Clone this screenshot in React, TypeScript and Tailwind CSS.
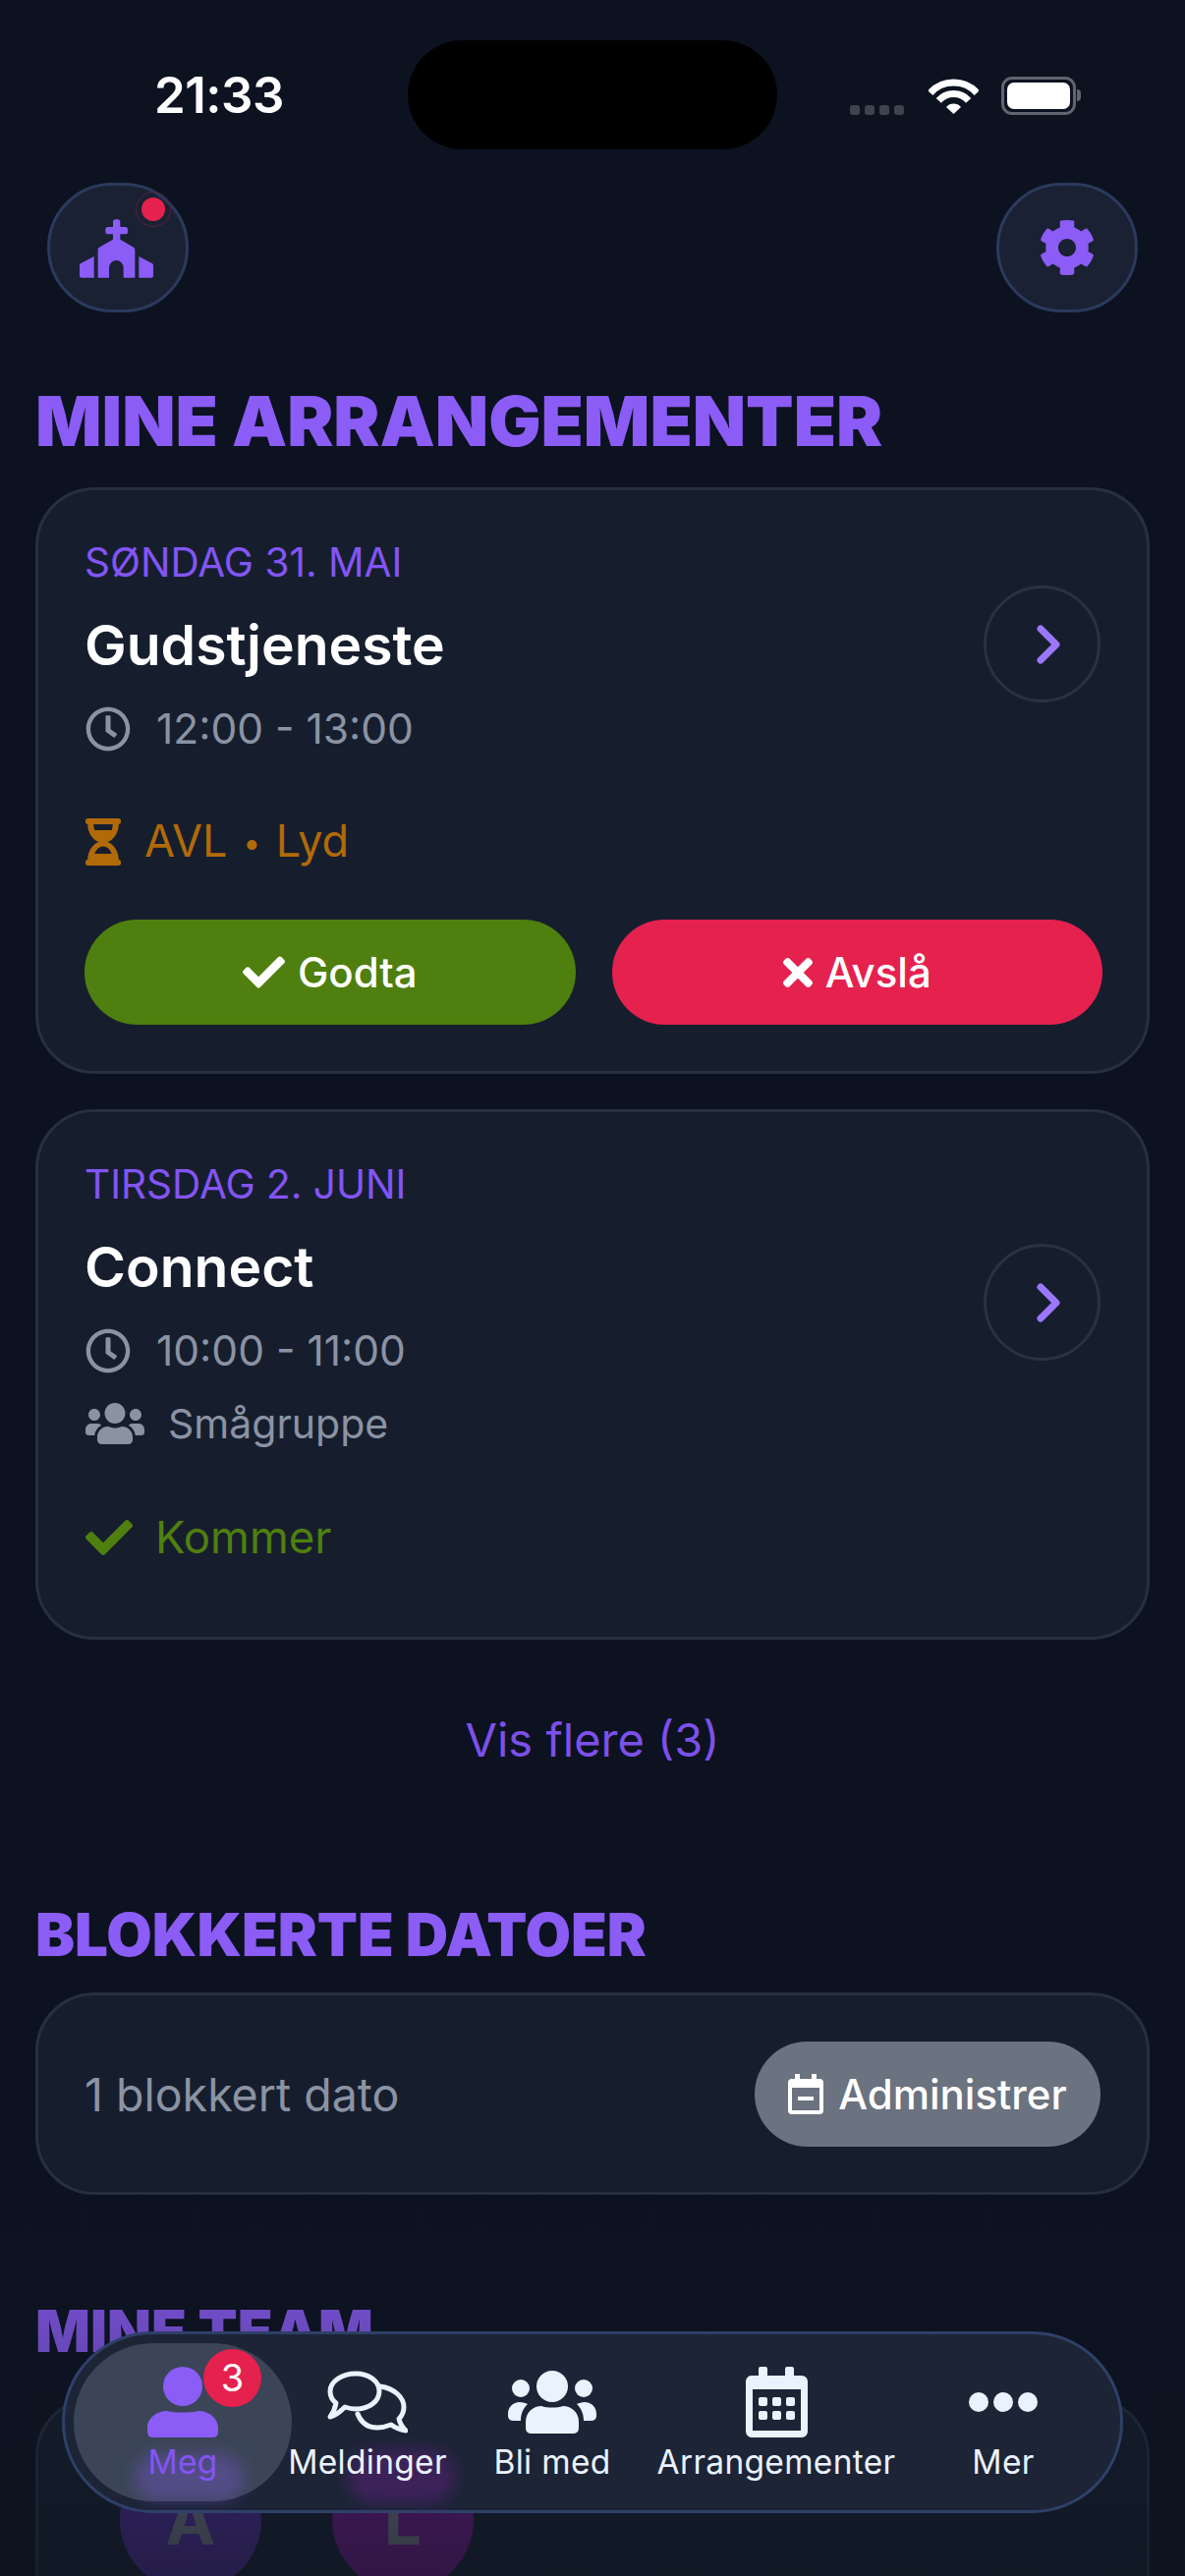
import React from 'react';
import { FaCog, FaRegClock, FaHourglassHalf, FaCheck, FaTimes, FaUsers } from 'react-icons/fa';

const ChurchIcon = () => (
  <svg viewBox="0 0 225 178" className="w-[75px] h-[60px] fill-[#8b5cf6]">
    <path d="M102 8a8 8 0 0 1 8-8h6a8 8 0 0 1 8 8v15h15a8 8 0 0 1 8 8v6a8 8 0 0 1-8 8h-15v16l41 24a8 8 0 0 1 4 7v86h-35v-30a22 23 0 0 0-44 0v30H56V92a8 8 0 0 1 4-7l42-24V45H87a8 8 0 0 1-8-8v-6a8 8 0 0 1 8-8h15z" />
    <path d="M44 113v65H6a6 6 0 0 1-6-6v-32a7 7 0 0 1 4-6zM181 113v65h38a6 6 0 0 0 6-6v-32a7 7 0 0 0-4-6z" />
  </svg>
);

const Chevron = () => (
  <div className="w-[119px] h-[119px] shrink-0 -mt-[6px] rounded-full border-[3px] border-[#283243] flex items-center justify-center">
    <svg viewBox="0 0 24 40" className="w-[24px] h-[40px] ml-[13px] fill-none stroke-[#9b77fb] stroke-[7px]" strokeLinecap="round" strokeLinejoin="round">
      <path d="M4 4l16 16L4 36" />
    </svg>
  </div>
);

const Card = ({ className, children }: { className: string; children: React.ReactNode }) => (
  <div className={`mx-[36px] rounded-[60px] border-[3px] border-[#263040] bg-[#161e2e] ${className}`}>{children}</div>
);

const ChatIcon = () => (
  <svg viewBox="0 0 82 64" className="w-[82px] h-[64px] fill-none stroke-[#eaf2fd] stroke-[5px]" strokeLinejoin="round" strokeLinecap="round">
    <path d="M29 3C43 3 53 11 53 21C53 31 43 39 29 39C25 39 21 38 18 37C13 42 8 46 3 47C6 43 8 38 9 33C5 30 3 26 3 21C3 11 15 3 29 3Z" />
    <path d="M54 16C68 18 78 27 78 37C78 42 76 46 73 49C74 54 77 58 80 61C74 60 69 58 65 55C60 57 56 58 51 58C42 58 35 54 31 44" />
  </svg>
);

const UsersIcon = () => (
  <svg viewBox="0 0 90 64" className="w-[90px] h-[64px] fill-[#eaf2fd]">
    <circle cx="45" cy="16" r="16" />
    <circle cx="13" cy="18" r="9" />
    <circle cx="77" cy="18" r="9" />
    <path d="M18 52C18 42 26 36 34 36C40 38 50 38 56 36C64 36 72 42 72 52V58Q72 64 66 64H24Q18 64 18 58Z" />
    <path d="M0 44C0 37 5 32 12 32C15 32 18 33 20 34C16 38 13 43 13 51H6Q0 51 0 46ZM90 44C90 37 85 32 78 32C75 32 72 33 70 34C74 38 77 43 77 51H84Q90 51 90 46Z" />
  </svg>
);

const CalendarIcon = () => (
  <svg viewBox="0 0 63 72" className="w-[63px] h-[72px] fill-[#eaf2fd]">
    <path fillRule="evenodd" d="M13 2a2 2 0 0 1 2-2h5a2 2 0 0 1 2 2v7h18V2a2 2 0 0 1 2-2h5a2 2 0 0 1 2 2v7h8a6 6 0 0 1 6 6v51a6 6 0 0 1-6 6H6a6 6 0 0 1-6-6V15a6 6 0 0 1 6-6h7zM7 23v42h49V23z" />
    <rect x="13" y="31" width="9" height="9" rx="2" />
    <rect x="27" y="31" width="9" height="9" rx="2" />
    <rect x="41" y="31" width="9" height="9" rx="2" />
    <rect x="13" y="45" width="9" height="9" rx="2" />
    <rect x="27" y="45" width="9" height="9" rx="2" />
    <rect x="41" y="45" width="9" height="9" rx="2" />
  </svg>
);

const navItems = [
  { label: 'Bli med', icon: <UsersIcon /> },
  { label: 'Arrangementer', icon: <CalendarIcon /> },
  { label: 'Mer', icon: null },
];

const NavLabel = ({ children, active }: { children: React.ReactNode; active?: boolean }) => (
  <span className={`block text-[33.5px] leading-[40px] whitespace-nowrap tracking-[0.3px] mt-[5px] ${active ? 'text-[#8355f5]' : 'text-[#eaf2fd]'}`}>
    {children}
  </span>
);

export default function App() {
  return (
    <div className="relative h-[2622px] w-[1206px] overflow-hidden bg-[#0c1220] font-['Inter',sans-serif]">
      {/* status bar */}
      <div className="flex items-center pt-[41px] pl-[157px]">
        <span className="w-[258px] text-[51px] leading-[60px] font-semibold text-white tracking-[-0.5px]">21:33</span>
        <div className="w-[376px] h-[111px] rounded-full bg-black" />
        <div className="flex items-end ml-[74px] h-[40px]">
          <div className="flex gap-[5px]">
            <span className="w-[10px] h-[10px] rounded-[3px] bg-[#3e4350]" />
            <span className="w-[10px] h-[10px] rounded-[3px] bg-[#3e4350]" />
            <span className="w-[10px] h-[10px] rounded-[3px] bg-[#3e4350]" />
            <span className="w-[10px] h-[10px] rounded-[3px] bg-[#3e4350]" />
          </div>
          <svg viewBox="0 0 51 38" className="w-[51px] h-[38px] ml-[25px] fill-none stroke-white">
            <path d="M1.7 15.6A32 32 0 0 1 49.3 15.6" strokeWidth="7" />
            <path d="M10.3 23.3A20.5 20.5 0 0 1 40.7 23.3" strokeWidth="7" />
            <path d="M25.5 37L18 30A10 10 0 0 1 33 30Z" className="fill-white stroke-none" />
          </svg>
          <div className="ml-[23px] flex items-center h-[39px]">
            <div className="w-[76px] h-[39px] rounded-[11px] border-[3px] border-[#5f6570] p-[3px]">
              <div className="h-full w-full rounded-[7px] bg-white" />
            </div>
            <div className="w-[4px] h-[12px] rounded-r-full bg-[#5f6570] ml-[1px]" />
          </div>
        </div>
      </div>

      {/* header buttons */}
      <div className="flex justify-between px-[48px] mt-[34px]">
        <div className="relative w-[144px] h-[132px] rounded-full bg-[#1a2133] border-[3px] border-[#2b3a5c] flex items-center justify-center">
          <div className="mt-[2px] mr-[3px]"><ChurchIcon /></div>
          <span className="absolute top-[6px] right-[15px] w-[36px] h-[36px] rounded-full border border-[#5c1f3a] flex items-center justify-center">
            <span className="w-[24px] h-[24px] rounded-full bg-[#e6214d]" />
          </span>
        </div>
        <div className="w-[144px] h-[132px] rounded-full bg-[#1a2133] border-[3px] border-[#2b3a5c] flex items-center justify-center">
          <FaCog className="w-[58px] h-[58px] text-[#8b5cf6]" />
        </div>
      </div>

      <h1 className="ml-[36px] mt-[69px] text-[70.7px] leading-[84px] font-black text-[#8b5cf6]">MINE ARRANGEMENTER</h1>

      {/* Gudstjeneste */}
      <Card className="mt-[25px] h-[597px] pt-[50px] pl-[48px] pr-[47px]">
        <div className="flex items-center">
          <div className="flex-1">
            <div className="-ml-[1px] text-[40.5px] leading-[48px] text-[#8355f5]">SØNDAG 31. MAI</div>
            <div className="-ml-[1px] text-[57px] leading-[68px] font-semibold text-white mt-[26px]">Gudstjeneste</div>
            <div className="flex items-center mt-[25px]">
              <FaRegClock className="w-[46px] h-[46px] text-[#8b93a3]" />
              <span className="ml-[26px] text-[42.5px] leading-[52px] text-[#8b93a3]">12:00 - 13:00</span>
            </div>
          </div>
          <Chevron />
        </div>
        <div className="flex items-center mt-[60px]">
          <FaHourglassHalf className="w-[36px] h-[48px] text-[#b16a08]" />
          <span className="ml-[24px] text-[45px] leading-[56px] text-[#b16a08]">
            AVL <span className="mx-[3px] text-[32px] align-[3px]">•</span> Lyd
          </span>
        </div>
        <div className="flex gap-[37px] mt-[50px] -ml-[1px] -mr-[2px]">
          <button className="flex-1 h-[107px] rounded-full bg-[#4f7f0e] flex items-center justify-center gap-[13px] text-white text-[42px] font-medium">
            <FaCheck className="w-[43px] h-[43px]" />Godta
          </button>
          <button className="flex-1 h-[107px] rounded-full bg-[#e5214e] flex items-center justify-center gap-[13px] text-white text-[42px] font-medium">
            <FaTimes className="w-[30px] h-[44px]" />Avslå
          </button>
        </div>
      </Card>

      {/* Connect */}
      <Card className="mt-[36px] h-[540px] pt-[50px] pl-[48px] pr-[47px]">
        <div className="flex items-center">
          <div className="flex-1">
            <div className="-ml-[1px] text-[40.5px] leading-[48px] text-[#8355f5]">TIRSDAG 2. JUNI</div>
            <div className="-ml-[1px] text-[57px] leading-[68px] font-semibold text-white mt-[26px]">Connect</div>
            <div className="flex items-center mt-[25px]">
              <FaRegClock className="w-[46px] h-[46px] text-[#8b93a3]" />
              <span className="ml-[26px] text-[42.5px] leading-[52px] text-[#8b93a3]">10:00 - 11:00</span>
            </div>
            <div className="flex items-center mt-[22px]">
              <FaUsers className="w-[60px] h-[48px] text-[#8b93a3]" />
              <span className="ml-[24px] text-[41px] leading-[52px] text-[#8b93a3]">Smågruppe</span>
            </div>
          </div>
          <Chevron />
        </div>
        <div className="flex items-center mt-[62px]">
          <FaCheck className="w-[48px] h-[48px] text-[#4f7f0e]" />
          <span className="ml-[23px] text-[45.5px] leading-[56px] text-[#4f7f0e]">Kommer</span>
        </div>
      </Card>

      <div className="mt-[74px] text-center text-[47px] leading-[56px] text-[#7d50ea]">Vis flere (3)</div>

      <h2 className="ml-[36px] mt-[135px] text-[60px] leading-[70px] font-black text-[#8b5cf6]">BLOKKERTE DATOER</h2>

      <Card className="mt-[24px] h-[206px] pl-[48px] pr-[47px] flex items-center justify-between">
        <span className="pt-[3px] -ml-[1px] text-[46.5px] text-[#8b93a3]">1 blokkert dato</span>
        <button className="h-[107px] w-[352px] rounded-full bg-[#6b7280] flex items-center justify-center gap-[15px] text-white text-[42px] font-medium">
          <svg viewBox="0 0 36 41" className="w-[36px] h-[41px] fill-white">
            <path fillRule="evenodd" d="M7 0h5v5h12V0h5v5h3a4 4 0 0 1 4 4v28a4 4 0 0 1-4 4H4a4 4 0 0 1-4-4V9a4 4 0 0 1 4-4h3zM4 14v23h28V14z" />
            <rect x="10" y="23" width="16" height="4" />
          </svg>
          Administrer
        </button>
      </Card>

      <h2 className="ml-[36px] mt-[104px] text-[58.5px] leading-[70px] font-black text-[#8b5cf6]">MINE TEAM</h2>

      <Card className="mt-[32px] h-[400px] pt-[50px] px-[83px]">
        <div className="flex gap-[72px]">
          <div className="w-[144px] h-[144px] rounded-full bg-[#4b2b8f] flex items-center justify-center text-[68px] font-bold text-[#6f7282]">A</div>
          <div className="w-[144px] h-[144px] rounded-full bg-[#6a1984] flex items-center justify-center text-[68px] font-bold text-[#6f7282]">L</div>
        </div>
      </Card>

      {/* fade under the tab bar */}
      <div className="absolute inset-x-0 bottom-0 h-[420px] bg-gradient-to-b from-[#0f152000] to-[#0f1520a0]" />

      {/* tab bar */}
      <nav className="absolute left-[63px] top-[2373px] w-[1080px] h-[185px] rounded-full border-[3px] border-[#2f4068] bg-[#1c2436] pl-[9px] pt-[9px] grid grid-cols-[222px_154px_222px_234px_228px]">
        <span className="absolute left-[287px] top-[117px] w-[111px] h-[55px] rounded-full bg-[#8a1fb0]/30 blur-[8px]" />
        <div className="relative h-[161px] rounded-full bg-[#3b4557] flex flex-col items-center pt-[24px] overflow-visible">
          <span className="absolute left-[62px] top-[113px] w-[111px] h-[48px] rounded-full bg-[#8b5cf6]/30 blur-[8px]" />
          <svg viewBox="0 0 72 72" className="relative w-[72px] h-[72px] fill-[#8b5cf6]">
            <ellipse cx="36" cy="20" rx="20" ry="20" />
            <path d="M0 62C0 52 10 45 20 45C28 47 44 47 52 45C62 45 72 52 72 62V66Q72 72 66 72H6Q0 72 0 66Z" />
          </svg>
          <div className="relative"><NavLabel active>Meg</NavLabel></div>
          <span className="absolute left-[132px] top-[6px] w-[59px] h-[59px] rounded-full bg-[#e5214e] flex items-center justify-center text-white text-[38px]">3</span>
        </div>
        <div className="relative flex flex-col items-center pt-[24px] h-[161px]">
          <div className="h-[72px] flex items-center justify-center"><ChatIcon /></div>
          <NavLabel>Meldinger</NavLabel>
        </div>
        {navItems.map((item) => (
          <div key={item.label} className="relative flex flex-col items-center h-[161px] pt-[24px]">
            <div className="h-[72px] flex items-center justify-center">
              {item.icon ?? (
                <div className="flex gap-[5px]">
                  <span className="w-[20px] h-[20px] rounded-full bg-[#eaf2fd]" />
                  <span className="w-[20px] h-[20px] rounded-full bg-[#eaf2fd]" />
                  <span className="w-[20px] h-[20px] rounded-full bg-[#eaf2fd]" />
                </div>
              )}
            </div>
            <NavLabel>{item.label}</NavLabel>
          </div>
        ))}
      </nav>
    </div>
  );
}
